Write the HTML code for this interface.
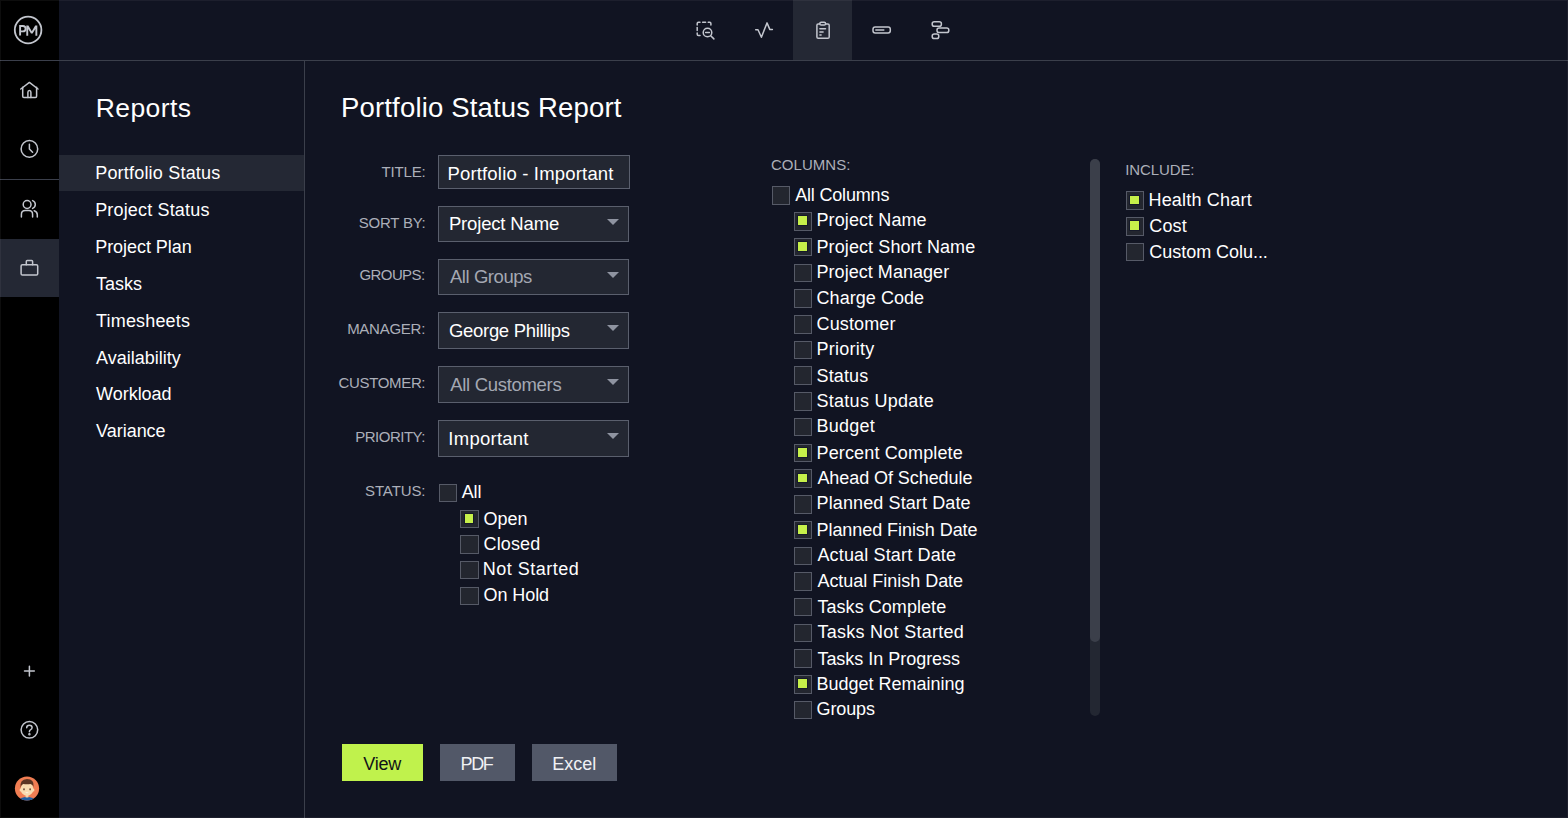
<!DOCTYPE html>
<html><head><meta charset="utf-8"><style>
*{margin:0;padding:0;box-sizing:border-box}
html,body{width:1568px;height:818px;overflow:hidden;background:#111422;font-family:"Liberation Sans",sans-serif}
.a{position:absolute}
.t{position:absolute;white-space:nowrap;line-height:1}
.cb{position:absolute;width:18.6px;height:18.6px;background:#23262f;border:1.6px solid #565a67}
.cb.on::after{content:"";position:absolute;left:3.3px;top:3.3px;width:8.8px;height:8.8px;background:#c6f04a;box-shadow:0 0 0 1px #161a2a}
.box{position:absolute;background:#232732;border:1.5px solid #5a5f6d}
.arr{position:absolute;width:0;height:0;border-left:6.6px solid transparent;border-right:6.6px solid transparent;border-top:6.6px solid #8e93a0}
</style></head><body>
<div class="a" style="left:0;top:0;width:59px;height:818px;background:#000"></div>
<div class="a" style="left:0;top:60px;width:1568px;height:1px;background:#3b3f4b"></div>
<div class="a" style="left:0;top:179px;width:59px;height:1px;background:#3b3f4b"></div>
<div class="a" style="left:0;top:239px;width:59px;height:58px;background:#242834"></div>
<div class="a" style="left:793px;top:0;width:59px;height:60px;background:#242834"></div>
<div class="a" style="left:304px;top:61px;width:1px;height:757px;background:#3b3f4b"></div>
<div class="a" style="left:59px;top:155px;width:245px;height:36px;background:#242834"></div>
<div class="box" style="left:438px;top:155px;width:192px;height:34px"></div>
<div class="box" style="left:438px;top:206px;width:190.5px;height:35.5px"></div>
<div class="arr" style="left:606.5px;top:218.8px"></div>
<div class="box" style="left:438px;top:258.5px;width:190.5px;height:36.5px"></div>
<div class="arr" style="left:606.5px;top:271.9px"></div>
<div class="box" style="left:438px;top:312px;width:190.5px;height:36.5px"></div>
<div class="arr" style="left:606.5px;top:325.4px"></div>
<div class="box" style="left:438px;top:366px;width:190.5px;height:36.5px"></div>
<div class="arr" style="left:606.5px;top:379.4px"></div>
<div class="box" style="left:438px;top:420px;width:190.5px;height:36.5px"></div>
<div class="arr" style="left:606.5px;top:433.4px"></div>
<div class="cb" style="left:438.6px;top:483.6px"></div>
<div class="cb on" style="left:460.4px;top:509.5px"></div>
<div class="cb" style="left:460.4px;top:535.2px"></div>
<div class="cb" style="left:460.4px;top:560.9px"></div>
<div class="cb" style="left:460.4px;top:586.6px"></div>
<div class="cb" style="left:771.8px;top:186.3px"></div>
<div class="cb on" style="left:793.8px;top:212.1px"></div>
<div class="cb on" style="left:793.8px;top:237.8px"></div>
<div class="cb" style="left:793.8px;top:263.5px"></div>
<div class="cb" style="left:793.8px;top:289.3px"></div>
<div class="cb" style="left:793.8px;top:315.0px"></div>
<div class="cb" style="left:793.8px;top:340.7px"></div>
<div class="cb" style="left:793.8px;top:366.4px"></div>
<div class="cb" style="left:793.8px;top:392.1px"></div>
<div class="cb" style="left:793.8px;top:417.9px"></div>
<div class="cb on" style="left:793.8px;top:443.6px"></div>
<div class="cb on" style="left:793.8px;top:469.3px"></div>
<div class="cb" style="left:793.8px;top:495.0px"></div>
<div class="cb on" style="left:793.8px;top:520.7px"></div>
<div class="cb" style="left:793.8px;top:546.5px"></div>
<div class="cb" style="left:793.8px;top:572.2px"></div>
<div class="cb" style="left:793.8px;top:597.9px"></div>
<div class="cb" style="left:793.8px;top:623.6px"></div>
<div class="cb" style="left:793.8px;top:649.3px"></div>
<div class="cb on" style="left:793.8px;top:675.1px"></div>
<div class="cb" style="left:793.8px;top:700.8px"></div>
<div class="cb on" style="left:1125.6px;top:191.3px"></div>
<div class="cb on" style="left:1125.6px;top:217.1px"></div>
<div class="cb" style="left:1125.6px;top:242.8px"></div>
<div class="a" style="left:1090px;top:159px;width:10px;height:557px;border-radius:5px;background:#232732"></div>
<div class="a" style="left:1090px;top:159px;width:10px;height:483px;border-radius:5px;background:#3b3f4a"></div>
<div class="a" style="left:342px;top:744px;width:81px;height:37px;background:#c0f24c"></div>
<div class="a" style="left:440px;top:744px;width:75px;height:37px;background:#525868"></div>
<div class="a" style="left:532px;top:744px;width:85px;height:37px;background:#525868"></div>
<svg class="a" style="left:9px;top:10px" width="40" height="40" viewBox="0 0 40 40" fill="none" stroke="#c3c6ce" stroke-width="1.5" stroke-linecap="round" stroke-linejoin="round"><circle cx="19.1" cy="20" r="13.3" stroke-width="1.8"/><path d="M11.1 25.6 V16 H13.9 Q16.6 16 16.6 18.7 Q16.6 21.4 13.9 21.4 H11.1" stroke-width="1.9" stroke-linecap="butt" stroke-linejoin="miter"/><path d="M17.3 25.7 V15.6 H19.4 L22.8 21.2 L26.2 15.6 H28.3 V25.7 H26.4 V19.1 L23.6 23.5 H22 L19.2 19.1 V25.7 Z" fill="#c3c6ce" stroke="none"/></svg>
<svg class="a" style="left:9px;top:69px" width="40" height="40" viewBox="0 0 40 40" fill="none" stroke="#c3c6ce" stroke-width="1.5" stroke-linecap="round" stroke-linejoin="round"><path d="M11.8 20 L20.4 13.4 L29 20"/><path d="M13.7 18.2 V27.2 Q13.7 28.4 14.9 28.4 H26.4 Q27.6 28.4 27.6 27.2 V18.2"/><path d="M18.9 28.4 V23.2 Q18.9 21.4 20.4 21.4 Q21.9 21.4 21.9 23.2 V28.4"/></svg>
<svg class="a" style="left:9px;top:128px" width="40" height="40" viewBox="0 0 40 40" fill="none" stroke="#c3c6ce" stroke-width="1.5" stroke-linecap="round" stroke-linejoin="round"><circle cx="20.4" cy="20.9" r="8.3"/><path d="M20.4 16.3 V21 L23.6 24.3"/></svg>
<svg class="a" style="left:9px;top:188px" width="40" height="40" viewBox="0 0 40 40" fill="none" stroke="#c3c6ce" stroke-width="1.5" stroke-linecap="round" stroke-linejoin="round"><circle cx="18.1" cy="16.5" r="3.9"/><path d="M12.4 29 V26.5 Q12.4 22.6 16.3 22.6 H19.8 Q23.6 22.6 23.6 26.5 V29"/><path d="M23.6 12.6 Q26.3 13.6 26.3 16.5 Q26.3 19.4 23.6 20.4"/><path d="M25.2 22.8 Q28.3 23.6 28.3 26.8 V29"/></svg>
<svg class="a" style="left:9px;top:248px" width="40" height="40" viewBox="0 0 40 40" fill="none" stroke="#c3c6ce" stroke-width="1.5" stroke-linecap="round" stroke-linejoin="round"><rect x="12.1" y="16.8" width="16.6" height="10.3" rx="1.3"/><path d="M17.3 16.8 V13.5 Q17.3 12.6 18.2 12.6 H22.7 Q23.6 12.6 23.6 13.5 V16.8"/></svg>
<svg class="a" style="left:9px;top:651px" width="40" height="40" viewBox="0 0 40 40" fill="none" stroke="#c3c6ce" stroke-width="1.5" stroke-linecap="round" stroke-linejoin="round"><path d="M20.4 15.2 V25 M15.5 20.1 H25.3"/></svg>
<svg class="a" style="left:9px;top:709px" width="40" height="40" viewBox="0 0 40 40" fill="none" stroke="#c3c6ce" stroke-width="1.5" stroke-linecap="round" stroke-linejoin="round"><circle cx="20.4" cy="20.8" r="8.3"/><path d="M17.7 18.8 Q17.7 16.3 20.4 16.3 Q23.1 16.3 23.1 18.6 Q23.1 20.2 21.4 20.9 Q20.4 21.4 20.4 22.8"/><circle cx="20.4" cy="25.3" r="0.5" fill="#c3c6ce"/></svg>
<svg class="a" style="left:7px;top:768px" width="40" height="40" viewBox="0 0 40 40"><defs><clipPath id="avc"><circle cx="20" cy="20.5" r="12.1"/></clipPath></defs><circle cx="20" cy="20.5" r="12.1" fill="#f07d52"/><g clip-path="url(#avc)"><path d="M10.5 34 Q12.5 29.2 20 28.8 Q27.5 29.2 29.5 34 Z" fill="#1e5fa3"/><rect x="18.6" y="25.5" width="2.8" height="4" fill="#f5d3a6"/><ellipse cx="20" cy="21" rx="6.4" ry="6.7" fill="#f8dcb0"/><ellipse cx="13.6" cy="22" rx="1" ry="1.5" fill="#f8dcb0"/><ellipse cx="26.4" cy="22" rx="1" ry="1.5" fill="#f8dcb0"/><path d="M13.5 19.8 Q12.6 11.4 20 11.1 Q27.4 11.2 26.6 19 Q25.9 16.2 23.5 15.9 Q20 16.7 16.2 15.9 Q14.2 16.6 13.5 19.8 Z" fill="#5a3522"/><ellipse cx="17" cy="21.3" rx="0.8" ry="1.1" fill="#5a3a2a"/><ellipse cx="23.1" cy="21.3" rx="0.8" ry="1.1" fill="#5a3a2a"/><path d="M18.2 24.6 Q20 26 21.8 24.6 Z" fill="#fff"/></g></svg>
<svg class="a" style="left:685px;top:10px" width="40" height="40" viewBox="0 0 40 40" fill="none" stroke="#c3c6ce" stroke-width="1.5" stroke-linecap="round" stroke-linejoin="round"><path d="M12.2 15 V13.4 Q12.2 12.2 13.4 12.2 H15"/><path d="M17.6 12.2 H20.6"/><path d="M23.2 12.2 H24.7 Q25.9 12.2 25.9 13.4 V15"/><path d="M12.2 17.6 V20.6"/><path d="M12.2 23 V24.2 Q12.2 25.4 13.4 25.4 H15"/><circle cx="22.5" cy="22.5" r="4.3"/><path d="M20.6 22.5 H24.4"/><path d="M25.7 25.7 L28.9 28.9"/></svg>
<svg class="a" style="left:744px;top:10px" width="40" height="40" viewBox="0 0 40 40" fill="none" stroke="#c3c6ce" stroke-width="1.5" stroke-linecap="round" stroke-linejoin="round"><path d="M11.7 19.8 H14 L17.4 27.2 L23 12.9 L25.9 19.6 H28.4"/></svg>
<svg class="a" style="left:802px;top:10px" width="40" height="40" viewBox="0 0 40 40" fill="none" stroke="#c3c6ce" stroke-width="1.5" stroke-linecap="round" stroke-linejoin="round"><path d="M17.6 13.9 H16.2 Q14.9 13.9 14.9 15.2 V26.9 Q14.9 28.2 16.2 28.2 H25.9 Q27.2 28.2 27.2 26.9 V15.2 Q27.2 13.9 25.9 13.9 H23.7"/><rect x="17.8" y="12.3" width="5.8" height="2.8" rx="1.4"/><path d="M17.9 18.8 H23.5 M17.9 21.9 H21.1 M17.9 25 H19.1"/></svg>
<svg class="a" style="left:861px;top:10px" width="40" height="40" viewBox="0 0 40 40" fill="none" stroke="#c3c6ce" stroke-width="1.5" stroke-linecap="round" stroke-linejoin="round"><rect x="12" y="17.1" width="17.3" height="5.9" rx="2.2"/><path d="M14.8 20 H22.8"/></svg>
<svg class="a" style="left:920px;top:10px" width="40" height="40" viewBox="0 0 40 40" fill="none" stroke="#c3c6ce" stroke-width="1.5" stroke-linecap="round" stroke-linejoin="round"><rect x="12.2" y="11.7" width="9.2" height="4.6" rx="2.1"/><rect x="17" y="17.9" width="11.8" height="4.6" rx="2.1"/><rect x="12.2" y="24.1" width="6.6" height="4.5" rx="2.1"/></svg>
<div class="a" style="left:0;top:0;width:1568px;height:818px;box-shadow:inset 0 0 0 1px rgba(255,255,255,0.05);z-index:5"></div>
<div class="t" id="t0" style="left:95.72px;top:95.26px;font-size:26.5px;letter-spacing:0.405px;color:#ffffff">Reports</div>
<div class="t" id="t1" style="left:95.18px;top:164.32px;font-size:18px;letter-spacing:0.204px;color:#ffffff">Portfolio Status</div>
<div class="t" id="t2" style="left:95.18px;top:200.76px;font-size:18px;letter-spacing:0.166px;color:#ffffff">Project Status</div>
<div class="t" id="t3" style="left:95.18px;top:238.10px;font-size:18px;letter-spacing:-0.049px;color:#ffffff">Project Plan</div>
<div class="t" id="t4" style="left:96.08px;top:274.54px;font-size:18px;letter-spacing:0.000px;color:#ffffff">Tasks</div>
<div class="t" id="t5" style="left:96.08px;top:311.76px;font-size:18px;letter-spacing:0.160px;color:#ffffff">Timesheets</div>
<div class="t" id="t6" style="left:96.08px;top:348.82px;font-size:18px;letter-spacing:0.000px;color:#ffffff">Availability</div>
<div class="t" id="t7" style="left:96.08px;top:384.98px;font-size:18px;letter-spacing:-0.026px;color:#ffffff">Workload</div>
<div class="t" id="t8" style="left:96.08px;top:422.04px;font-size:18px;letter-spacing:-0.026px;color:#ffffff">Variance</div>
<div class="t" id="t9" style="left:341.01px;top:94.28px;font-size:27.5px;letter-spacing:0.172px;color:#ffffff">Portfolio Status Report</div>
<div class="t" id="t10" style="left:381.53px;top:163.66px;font-size:15px;letter-spacing:-0.180px;color:#acafb9">TITLE:</div>
<div class="t" id="t11" style="left:358.75px;top:215.10px;font-size:15px;letter-spacing:-0.231px;color:#acafb9">SORT BY:</div>
<div class="t" id="t12" style="left:359.53px;top:267.16px;font-size:15px;letter-spacing:-0.600px;color:#acafb9">GROUPS:</div>
<div class="t" id="t13" style="left:347.13px;top:320.88px;font-size:15px;letter-spacing:-0.257px;color:#acafb9">MANAGER:</div>
<div class="t" id="t14" style="left:338.53px;top:374.94px;font-size:15px;letter-spacing:-0.338px;color:#acafb9">CUSTOMER:</div>
<div class="t" id="t15" style="left:355.20px;top:428.72px;font-size:15px;letter-spacing:-0.495px;color:#acafb9">PRIORITY:</div>
<div class="t" id="t16" style="left:364.98px;top:483.16px;font-size:15px;letter-spacing:-0.090px;color:#acafb9">STATUS:</div>
<div class="t" id="t17" style="left:447.42px;top:164.52px;font-size:18.5px;letter-spacing:0.180px;color:#ffffff">Portfolio - Important</div>
<div class="t" id="t18" style="left:448.92px;top:214.68px;font-size:18.5px;letter-spacing:-0.164px;color:#ffffff">Project Name</div>
<div class="t" id="t19" style="left:449.95px;top:267.96px;font-size:18.5px;letter-spacing:-0.440px;color:#a4a8b2">All Groups</div>
<div class="t" id="t20" style="left:449.05px;top:321.74px;font-size:18.5px;letter-spacing:-0.321px;color:#ffffff">George Phillips</div>
<div class="t" id="t21" style="left:450.16px;top:376.24px;font-size:18.5px;letter-spacing:-0.300px;color:#a4a8b2">All Customers</div>
<div class="t" id="t22" style="left:448.36px;top:429.74px;font-size:18.5px;letter-spacing:0.247px;color:#ffffff">Important</div>
<div class="t" id="t23" style="left:461.64px;top:483.04px;font-size:18px;letter-spacing:-0.090px;color:#ffffff">All</div>
<div class="t" id="t24" style="left:483.58px;top:509.60px;font-size:18px;letter-spacing:-0.000px;color:#ffffff">Open</div>
<div class="t" id="t25" style="left:483.58px;top:534.76px;font-size:18px;letter-spacing:0.108px;color:#ffffff">Closed</div>
<div class="t" id="t26" style="left:482.68px;top:560.04px;font-size:18px;letter-spacing:0.504px;color:#ffffff">Not Started</div>
<div class="t" id="t27" style="left:483.58px;top:586.10px;font-size:18px;letter-spacing:-0.090px;color:#ffffff">On Hold</div>
<div class="t" id="t28" style="left:770.95px;top:157.46px;font-size:15px;letter-spacing:0.051px;color:#acafb9">COLUMNS:</div>
<div class="t" id="t29" style="left:795.20px;top:185.54px;font-size:18px;letter-spacing:-0.180px;color:#ffffff">All Columns</div>
<div class="t" id="t30" style="left:816.52px;top:211.48px;font-size:18px;letter-spacing:0.098px;color:#ffffff">Project Name</div>
<div class="t" id="t31" style="left:816.52px;top:237.78px;font-size:18px;letter-spacing:0.095px;color:#ffffff">Project Short Name</div>
<div class="t" id="t32" style="left:816.52px;top:263.17px;font-size:18px;letter-spacing:0.039px;color:#ffffff">Project Manager</div>
<div class="t" id="t33" style="left:816.52px;top:289.47px;font-size:18px;letter-spacing:0.054px;color:#ffffff">Charge Code</div>
<div class="t" id="t34" style="left:816.52px;top:314.87px;font-size:18px;letter-spacing:0.129px;color:#ffffff">Customer</div>
<div class="t" id="t35" style="left:816.52px;top:340.26px;font-size:18px;letter-spacing:0.257px;color:#ffffff">Priority</div>
<div class="t" id="t36" style="left:816.52px;top:366.56px;font-size:18px;letter-spacing:0.144px;color:#ffffff">Status</div>
<div class="t" id="t37" style="left:816.52px;top:391.95px;font-size:18px;letter-spacing:0.270px;color:#ffffff">Status Update</div>
<div class="t" id="t38" style="left:816.52px;top:417.35px;font-size:18px;letter-spacing:0.252px;color:#ffffff">Budget</div>
<div class="t" id="t39" style="left:816.52px;top:443.65px;font-size:18px;letter-spacing:0.144px;color:#ffffff">Percent Complete</div>
<div class="t" id="t40" style="left:817.42px;top:469.04px;font-size:18px;letter-spacing:-0.068px;color:#ffffff">Ahead Of Schedule</div>
<div class="t" id="t41" style="left:816.52px;top:494.44px;font-size:18px;letter-spacing:0.116px;color:#ffffff">Planned Start Date</div>
<div class="t" id="t42" style="left:816.52px;top:520.74px;font-size:18px;letter-spacing:-0.060px;color:#ffffff">Planned Finish Date</div>
<div class="t" id="t43" style="left:817.42px;top:546.13px;font-size:18px;letter-spacing:0.157px;color:#ffffff">Actual Start Date</div>
<div class="t" id="t44" style="left:817.42px;top:571.53px;font-size:18px;letter-spacing:-0.021px;color:#ffffff">Actual Finish Date</div>
<div class="t" id="t45" style="left:817.42px;top:597.82px;font-size:18px;letter-spacing:0.055px;color:#ffffff">Tasks Complete</div>
<div class="t" id="t46" style="left:817.42px;top:623.22px;font-size:18px;letter-spacing:0.270px;color:#ffffff">Tasks Not Started</div>
<div class="t" id="t47" style="left:817.42px;top:649.51px;font-size:18px;letter-spacing:-0.023px;color:#ffffff">Tasks In Progress</div>
<div class="t" id="t48" style="left:816.52px;top:674.91px;font-size:18px;letter-spacing:-0.012px;color:#ffffff">Budget Remaining</div>
<div class="t" id="t49" style="left:816.52px;top:700.31px;font-size:18px;letter-spacing:-0.108px;color:#ffffff">Groups</div>
<div class="t" id="t50" style="left:1125.17px;top:162.24px;font-size:15px;letter-spacing:-0.103px;color:#acafb9">INCLUDE:</div>
<div class="t" id="t51" style="left:1148.46px;top:191.04px;font-size:18px;letter-spacing:0.196px;color:#ffffff">Health Chart</div>
<div class="t" id="t52" style="left:1149.36px;top:216.79px;font-size:18px;letter-spacing:0.120px;color:#ffffff">Cost</div>
<div class="t" id="t53" style="left:1149.36px;top:242.54px;font-size:18px;letter-spacing:-0.042px;color:#ffffff">Custom Colu...</div>
<div class="t" id="t54" style="left:363.14px;top:754.54px;font-size:18px;letter-spacing:-0.180px;color:#111318">View</div>
<div class="t" id="t55" style="left:460.52px;top:754.54px;font-size:18px;letter-spacing:-1.350px;color:#f0f1f4">PDF</div>
<div class="t" id="t56" style="left:552.24px;top:754.54px;font-size:18px;letter-spacing:0.000px;color:#f0f1f4">Excel</div>
</body></html>
